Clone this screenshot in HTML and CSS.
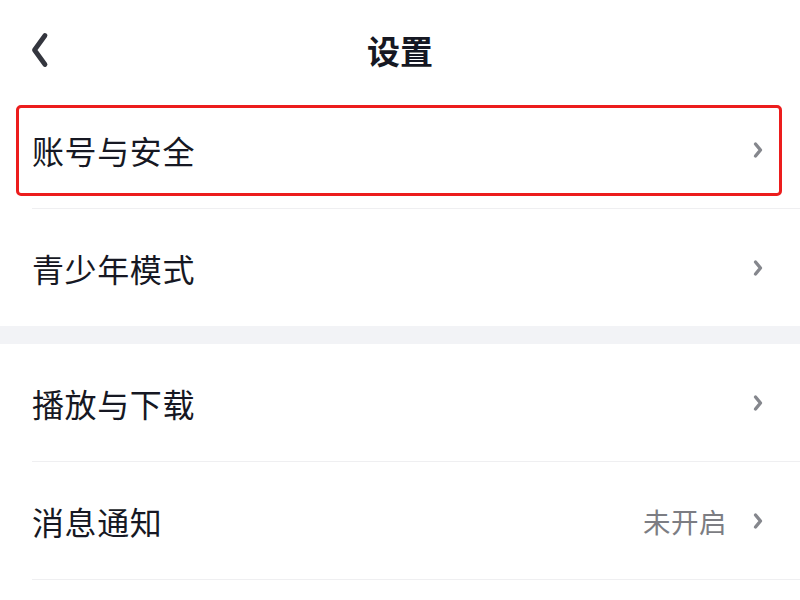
FILE: index.html
```html
<!DOCTYPE html>
<html lang="zh-CN">
<head>
<meta charset="utf-8">
<title>设置</title>
<link rel="stylesheet" href="styles.css">
</head>
<body>
<div class="page">
  <header class="header">
    <div class="back">
      <svg width="20" height="36" viewBox="0 0 20 36"><polyline points="15,3.5 4.5,18 15,32.5" fill="none" stroke="#34363e" stroke-width="4.8" stroke-linecap="round" stroke-linejoin="round"/></svg>
    </div>
    <h1 class="title">设置</h1>
    <div class="spacer"></div>
  </header>

  <section class="group">
    <div class="row highlighted">
      <div class="row-inner">
        <span class="label">账号与安全</span>
        <span class="right"><svg class="chev" width="12" height="18" viewBox="0 0 12 18"><polyline points="3.5,3 8.5,9 3.5,15" fill="none" stroke="#85878d" stroke-width="3.4" stroke-linecap="round" stroke-linejoin="round"/></svg></span>
      </div>
      <div class="highlight-box"></div>
    </div>
    <div class="row">
      <div class="row-inner last">
        <span class="label">青少年模式</span>
        <span class="right"><svg class="chev" width="12" height="18" viewBox="0 0 12 18"><polyline points="3.5,3 8.5,9 3.5,15" fill="none" stroke="#85878d" stroke-width="3.4" stroke-linecap="round" stroke-linejoin="round"/></svg></span>
      </div>
    </div>
  </section>

  <div class="band"></div>

  <section class="group">
    <div class="row">
      <div class="row-inner">
        <span class="label">播放与下载</span>
        <span class="right"><svg class="chev" width="12" height="18" viewBox="0 0 12 18"><polyline points="3.5,3 8.5,9 3.5,15" fill="none" stroke="#85878d" stroke-width="3.4" stroke-linecap="round" stroke-linejoin="round"/></svg></span>
      </div>
    </div>
    <div class="row">
      <div class="row-inner">
        <span class="label">消息通知</span>
        <span class="right"><span class="value">未开启</span><svg class="chev" width="12" height="18" viewBox="0 0 12 18"><polyline points="3.5,3 8.5,9 3.5,15" fill="none" stroke="#85878d" stroke-width="3.4" stroke-linecap="round" stroke-linejoin="round"/></svg></span>
      </div>
    </div>
  </section>
</div>
</body>
</html>
```
FILE: styles.css
```css
* { box-sizing: border-box; }
html, body { margin: 0; padding: 0; background: #ffffff; }
body {
  font-family: "Noto Sans CJK SC", "Noto Sans", sans-serif;
  color: #161823;
}
.page { width: 800px; }

.header {
  height: 91px;
  padding-top: 8px;
  display: grid;
  grid-template-columns: 1fr auto 1fr;
  align-items: center;
}
.back {
  padding-left: 30px;
  display: flex;
  align-items: center;
}
.back svg { display: block; }
.title {
  margin: 0;
  font-size: 33px;
  font-weight: 700;
  line-height: 40px;
  color: #161823;
}

.row {
  position: relative;
  padding-left: 32px;
}
.row-inner {
  height: 118px;
  display: flex;
  align-items: center;
  justify-content: space-between;
  padding-right: 36px;
  border-bottom: 1px solid #efeff1;
}
.row-inner.last { border-bottom: none; height: 117px; }
.label {
  font-size: 32px;
  letter-spacing: 0.6px;
  line-height: 40px;
  color: #161823;
}
.right {
  display: flex;
  align-items: center;
}
.value {
  font-size: 27.5px;
  color: #7c7d83;
  margin-right: 25px;
  letter-spacing: 0.5px;
}
.chev { display: block; }

.band {
  height: 18px;
  background: #f2f3f6;
}

.highlight-box {
  position: absolute;
  left: 16px;
  top: 14px;
  width: 766px;
  height: 91px;
  border: 3px solid #ec1d1d;
  border-radius: 5px;
  pointer-events: none;
}
```
